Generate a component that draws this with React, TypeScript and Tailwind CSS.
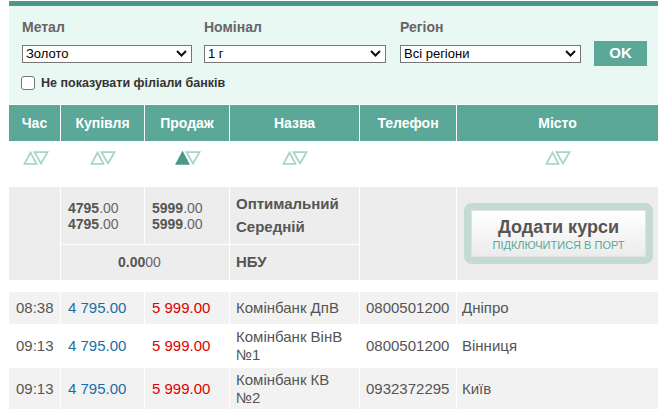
import React from "react";

const COLS = "grid grid-cols-[51px_84px_85px_130px_97px_202px]";

function Chevron() {
  return (
    <svg width="11" height="7" viewBox="0 0 11 7" className="shrink-0">
      <path d="M1 1 L5.5 5.5 L10 1" fill="none" stroke="#111" strokeWidth="2" />
    </svg>
  );
}

function FakeSelect({ value, w }: { value: string; w: string }) {
  return (
    <div className={`${w} h-[18px] bg-white border border-[#767676] flex items-center justify-between pl-[3px] pr-[4px] text-[13px] leading-[16px] text-black`}>
      <span>{value}</span>
      <Chevron />
    </div>
  );
}

function SortIcon({ active }: { active?: boolean }) {
  return (
    <svg width="26" height="14" viewBox="0 0 26 14">
      <polygon
        points="1.5,12.8 7.5,1.5 13.5,12.8"
        fill={active ? "#4b9a87" : "none"}
        stroke={active ? "#4b9a87" : "#a8d5cb"}
        strokeWidth="1.8"
      />
      <polygon points="11.5,1.2 24.5,1.2 18,12.5" fill="none" stroke="#a8d5cb" strokeWidth="1.8" />
    </svg>
  );
}

const rows = [
  { t: "08:38", b: "4 795.00", s: "5 999.00", n: ["Комінбанк ДпВ"], p: "0800501200", c: "Дніпро", h: "h-[32px]", bg: "bg-[#f2f2f2]" },
  { t: "09:13", b: "4 795.00", s: "5 999.00", n: ["Комінбанк ВінВ", "№1"], p: "0800501200", c: "Вінниця", h: "h-[44px]", bg: "bg-white" },
  { t: "09:13", b: "4 795.00", s: "5 999.00", n: ["Комінбанк КВ", "№2"], p: "0932372295", c: "Київ", h: "h-[41px]", bg: "bg-[#f2f2f2]" },
];

export default function App() {
  return (
    <div className="w-[665px] h-[418px] bg-white overflow-hidden font-['Liberation_Sans',Arial,sans-serif]">
      <div className="ml-[9px] w-[649px] pt-[1px]">
        {/* top bar */}
        <div className="h-[5px] bg-[#4b9a87]" />
        {/* filter panel */}
        <div className="h-[98px] bg-[#eaf8f4] pl-[13px] pt-[13px]">
          <div className="flex text-[14px] leading-[16px] font-bold text-[#666]">
            <div className="w-[182px]">Метал</div>
            <div className="w-[196px]">Номінал</div>
            <div>Регіон</div>
          </div>
          <div className="flex items-center h-[25px] mt-[6px]">
            <FakeSelect value="Золото" w="w-[170px]" />
            <div className="ml-[12px]">
              <FakeSelect value="1 г" w="w-[182px]" />
            </div>
            <div className="ml-[14px]">
              <FakeSelect value="Всі регіони" w="w-[181px]" />
            </div>
            <div className="ml-[13px] w-[53px] h-[25px] bg-[#5ba898] flex items-center justify-center text-white font-bold text-[15px]">
              OK
            </div>
          </div>
          <div className="flex items-center h-[16px] mt-[9px] -ml-[1px]">
            <div className="w-[14px] h-[14px] bg-white border border-[#767676] rounded-[3px]" />
            <span className="ml-[6px] text-[12.5px] font-bold text-[#333]">Не показувати філіали банків</span>
          </div>
        </div>
        {/* header */}
        <div className={`${COLS} mt-[1px] h-[36px] bg-[#5ba898] text-white font-bold text-[14px]`}>
          {["Час", "Купівля", "Продаж", "Назва", "Телефон", "Місто"].map((h, i) => (
            <div key={h} className={`flex items-center justify-center ${i > 0 ? "border-l border-white" : ""}`}>
              {h}
            </div>
          ))}
        </div>
        {/* sort row */}
        <div className={`${COLS} h-[46px] pt-[10px]`}>
          <div className="flex justify-center pl-[2px]"><SortIcon /></div>
          <div className="flex justify-center pl-[2px]"><SortIcon /></div>
          <div className="flex justify-center pl-[3px]"><SortIcon active /></div>
          <div className="flex justify-center pl-[2px]"><SortIcon /></div>
          <div />
          <div className="flex justify-center pl-[2px]"><SortIcon /></div>
        </div>
        {/* summary block */}
        <div className={`${COLS} grid-rows-[57px_36px] bg-[#ededed] text-[#555]`}>
          <div className="row-span-2" />
          <div className="border-l border-white pl-[7px] flex flex-col justify-center text-[14px] leading-[16px]">
            <div><b>4795</b><span className="text-[#666]">.00</span></div>
            <div><b>4795</b><span className="text-[#666]">.00</span></div>
          </div>
          <div className="border-l border-white pl-[7px] flex flex-col justify-center text-[14px] leading-[16px]">
            <div><b>5999</b><span className="text-[#666]">.00</span></div>
            <div><b>5999</b><span className="text-[#666]">.00</span></div>
          </div>
          <div className="border-l border-white pl-[6px] flex flex-col justify-center text-[15px] leading-[23px] font-bold pb-[1px]">
            <div>Оптимальний</div>
            <div>Середній</div>
          </div>
          <div className="row-span-2 border-l border-white" />
          <div className="row-span-2 border-l border-white flex items-center pl-[7px]">
            <div className="w-[189px] h-[61px] rounded-[8px] border-[7px] border-[#c3dad5] flex">
              <div className="flex-1 rounded-[3px] border border-[#e2e2e2] bg-linear-to-b from-white to-[#ececec] flex flex-col items-center justify-center">
                <div className="text-[18px] leading-[21px] font-bold text-[#555]">Додати курси</div>
                <div className="text-[11px] leading-[12px] text-[#5aa797] mt-[1px]">ПІДКЛЮЧИТИСЯ В ПОРТ</div>
              </div>
            </div>
          </div>
          <div className="col-span-2 border-l border-t border-white flex items-center justify-center pr-[11px] text-[14px]">
            <b>0.00</b><span className="text-[#666]">00</span>
          </div>
          <div className="border-l border-t border-white pl-[6px] flex items-center text-[15px] font-bold">
            НБУ
          </div>
        </div>
        {/* data rows */}
        <div className="mt-[12px] text-[15px] leading-[18px] text-[#555]">
          {rows.map((r, i) => (
            <div key={i} className={`${COLS} ${r.h} ${r.bg}`}>
              <div className="flex items-center pl-[7px]">{r.t}</div>
              <div className="flex items-center pl-[7px] border-l border-white text-[#1a6ea6]">{r.b}</div>
              <div className="flex items-center pl-[7px] border-l border-white text-[#e00000]">{r.s}</div>
              <div className="flex flex-col justify-center pl-[6px] border-l border-white">
                {r.n.map((x) => (
                  <div key={x}>{x}</div>
                ))}
              </div>
              <div className="flex items-center pl-[6px] border-l border-white">{r.p}</div>
              <div className="flex items-center pl-[5px] border-l border-white">{r.c}</div>
            </div>
          ))}
        </div>
      </div>
    </div>
  );
}
